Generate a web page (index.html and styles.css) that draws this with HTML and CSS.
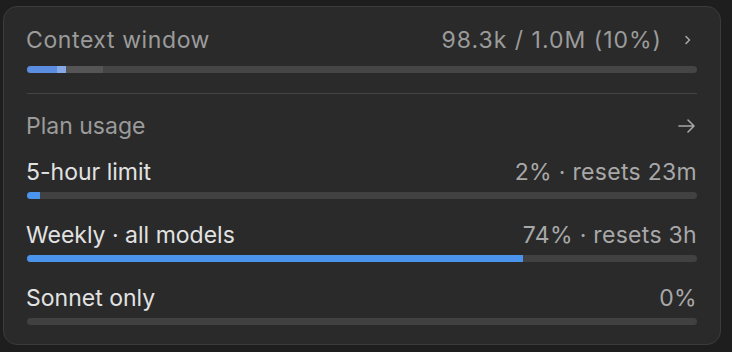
FILE: index.html
```html
<!DOCTYPE html>
<html>
<head>
<meta charset="utf-8">
<link rel="stylesheet" href="styles.css">
</head>
<body>
<div class="panel">
  <div class="row ctx-head">
    <span class="muted ctx-title">Context window</span>
    <span class="right">
      <span class="muted ctx-num">98.3k / 1.0M (10%)</span>
      <svg class="chev" width="10" height="12" viewBox="0 0 10 12"><path d="M3 2.5 L6.5 6 L3 9.5" fill="none" stroke="#a6a6a6" stroke-width="1.6" stroke-linecap="round" stroke-linejoin="round"/></svg>
    </span>
  </div>
  <div class="track ctx-track">
    <div class="seg seg-blue" style="width:30px"></div>
    <div class="seg seg-lblue" style="width:9px"></div>
    <div class="seg seg-gray" style="width:37px"></div>
  </div>
  <div class="divider"></div>
  <div class="row plan-head">
    <span class="muted">Plan usage</span>
    <svg class="arrow" width="20" height="16" viewBox="0 0 20 16"><path d="M2 8 H17 M11 2 L17 8 L11 14" fill="none" stroke="#a6a6a6" stroke-width="1.6" stroke-linecap="round" stroke-linejoin="round"/></svg>
  </div>
  <div class="usage">
    <div class="row">
      <span class="label">5-hour limit</span>
      <span class="value">2% · resets 23m</span>
    </div>
    <div class="track"><div class="fill" style="width:2%"></div></div>
  </div>
  <div class="usage">
    <div class="row">
      <span class="label">Weekly · all models</span>
      <span class="value">74% · resets 3h</span>
    </div>
    <div class="track"><div class="fill" style="width:74%"></div></div>
  </div>
  <div class="usage">
    <div class="row">
      <span class="label">Sonnet only</span>
      <span class="value">0%</span>
    </div>
    <div class="track"></div>
  </div>
</div>
</body>
</html>
```

FILE: styles.css
```css
html, body {
  margin: 0;
  padding: 0;
  background: #1e1e1e;
}
body {
  font-family: Inter, "Liberation Sans", sans-serif;
  width: 732px;
  height: 352px;
  overflow: hidden;
}
.panel {
  box-sizing: border-box;
  margin: 6px 0 0 3px;
  width: 718px;
  height: 339px;
  border: 1px solid #3b3b3b;
  border-radius: 14px;
  background: #2a2a2a;
  padding: 19px 23px 0 22px;
  display: flex;
  flex-direction: column;
}
.row {
  display: flex;
  justify-content: space-between;
  align-items: center;
  font-size: 23px;
  line-height: 28px;
  height: 28px;
}
.muted { color: #9b9b9b; }
.ctx-title { letter-spacing: 0.6px; }
.ctx-num { letter-spacing: 1px; }
.label { color: #e2e2e2; }
.value { color: #a8a8a8; letter-spacing: 0.3px; }
.right {
  display: flex;
  align-items: center;
  gap: 21px;
}
.chev { margin-right: 4px; }
.track {
  height: 7px;
  border-radius: 4px;
  background: #414141;
  display: flex;
  overflow: hidden;
  margin-left: 1px;
}
.ctx-track { margin-top: 12px; background: #454545; }
.seg { height: 100%; }
.seg-blue { background: #5b8ee0; }
.seg-lblue { background: #86a8e6; }
.seg-gray { background: #555555; }
.fill {
  height: 100%;
  background: #4a94ee;
}
.divider {
  height: 1px;
  background: #444444;
  margin: 20px 0 0 1px;
}
.plan-head { margin-top: 18px; }
.usage {
  display: flex;
  flex-direction: column;
  gap: 6px;
  margin-top: 18px;
}
.usage + .usage { margin-top: 22px; }
```
